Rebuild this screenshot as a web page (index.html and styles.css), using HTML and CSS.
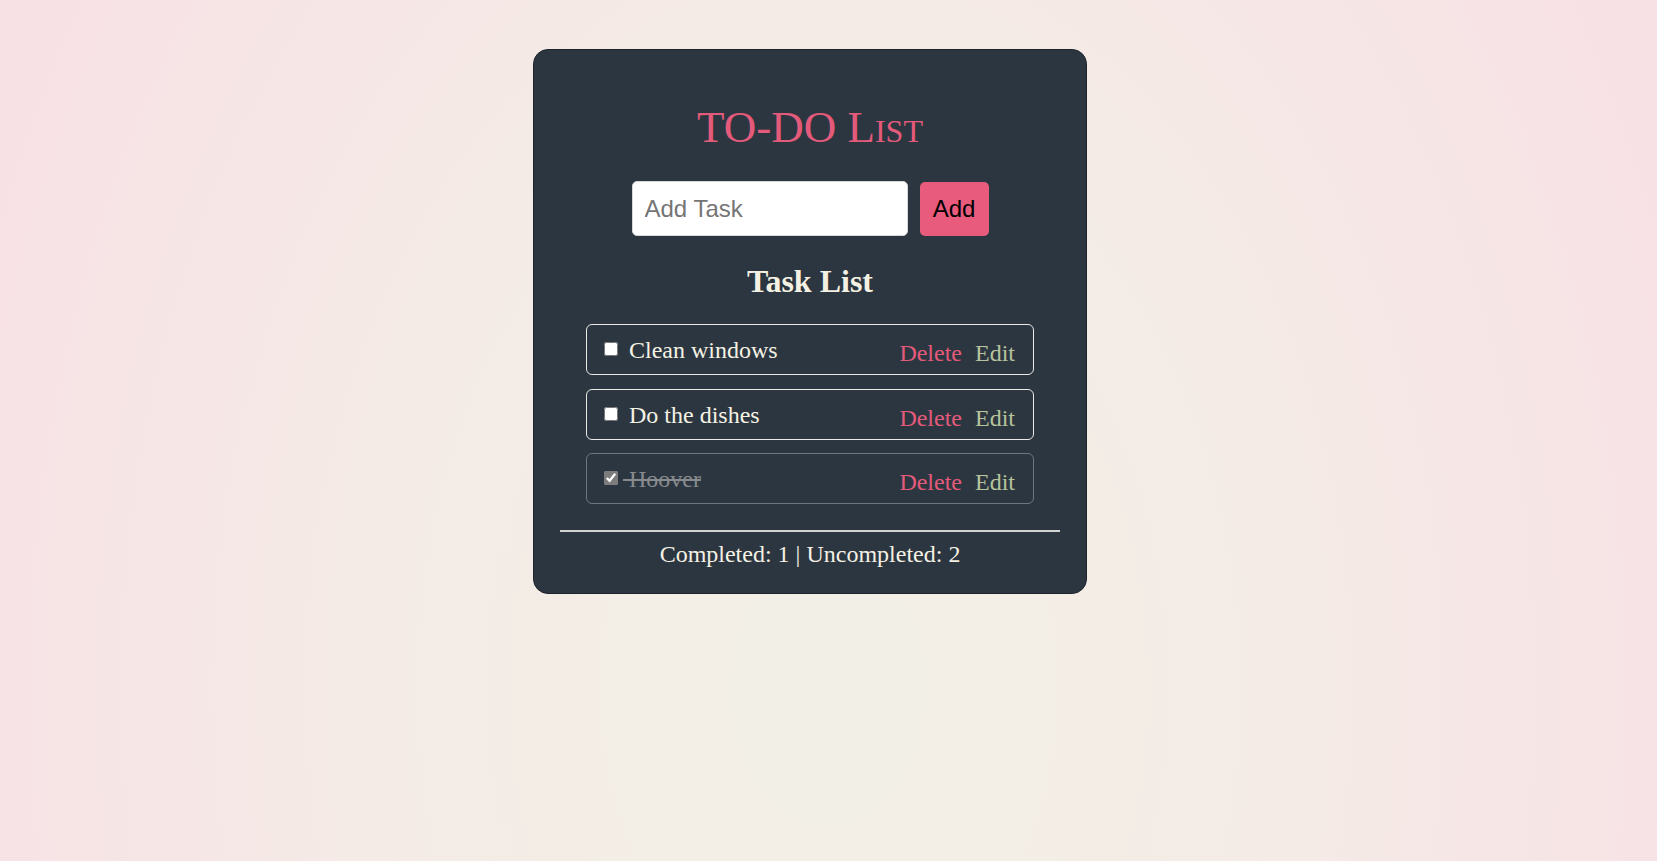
FILE: index.html
```html
<!DOCTYPE html>
<html lang="en">
<head>
<meta charset="utf-8">
<title>TO-DO List</title>
<link rel="stylesheet" href="styles.css">
</head>
<body>
<div class="page">
  <main class="card">
    <h1 class="title">TO-DO List</h1>
    <form class="add-row">
      <input class="add-input" type="text" placeholder="Add Task">
      <button class="add-btn" type="button">Add</button>
    </form>
    <h2 class="list-title">Task List</h2>
    <ul class="tasks">
      <li class="task">
        <label class="task-label"><input type="checkbox"><span class="task-text"> Clean windows</span></label>
        <div class="actions"><button class="del" type="button">Delete</button><button class="edit" type="button">Edit</button></div>
      </li>
      <li class="task">
        <label class="task-label"><input type="checkbox"><span class="task-text"> Do the dishes</span></label>
        <div class="actions"><button class="del" type="button">Delete</button><button class="edit" type="button">Edit</button></div>
      </li>
      <li class="task done">
        <label class="task-label"><input type="checkbox" checked><span class="task-text"> Hoover</span></label>
        <div class="actions"><button class="del" type="button">Delete</button><button class="edit" type="button">Edit</button></div>
      </li>
    </ul>
    <hr class="divider">
    <p class="stats">Completed: 1 | Uncompleted: 2</p>
  </main>
</div>
</body>
</html>
```
FILE: styles.css
```css
html, body {
  margin: 0;
  padding: 0;
}

body {
  min-height: 100vh;
  background: radial-gradient(ellipse 55% 150% at 50% 80%, #f2f0e6 0%, #f4ebe6 50%, #f8e1e5 100%);
  font-family: "Liberation Serif", "Times New Roman", serif;
}

.page {
  display: flex;
  justify-content: center;
  padding: 49px 37px 0 0;
}

.card {
  box-sizing: border-box;
  width: 554px;
  height: 545px;
  background: #2c3640;
  border: 1px solid #1d242b;
  border-radius: 15px;
  padding: 52px 26px 24px;
  display: flex;
  flex-direction: column;
  align-items: stretch;
}

.title {
  margin: 0;
  font-size: 45px;
  line-height: 50px;
  font-weight: 400;
  font-variant: small-caps;
  color: #e35a7b;
  text-align: center;
}

.add-row {
  margin: 29px 0 0;
  display: flex;
  justify-content: center;
  align-items: center;
  gap: 12px;
}

.add-input {
  box-sizing: border-box;
  width: 276px;
  height: 55px;
  border: 1px solid #d8d8d8;
  border-radius: 5px;
  padding: 0 12px;
  font-family: "Liberation Sans", Arial, sans-serif;
  font-size: 24px;
  color: #222;
  background: #fff;
  outline: none;
}

.add-input::placeholder {
  color: #757575;
}

.add-btn {
  box-sizing: border-box;
  height: 54px;
  width: 69px;
  padding: 0;
  border: none;
  border-radius: 5px;
  background: #e85b7c;
  color: #000;
  font-family: "Liberation Sans", Arial, sans-serif;
  font-size: 24px;
}

.list-title {
  margin: 25px 0 0;
  font-size: 32px;
  line-height: 40px;
  font-weight: 700;
  color: #f4f1e2;
  text-align: center;
}

.tasks {
  list-style: none;
  margin: 23px 26px 0;
  padding: 0;
  display: flex;
  flex-direction: column;
  gap: 13.5px;
}

.task {
  box-sizing: border-box;
  height: 51px;
  border: 1px solid #e9e9e6;
  border-radius: 6px;
  padding: 1px 18px 0 13px;
  display: flex;
  align-items: center;
  justify-content: space-between;
  font-size: 24px;
  line-height: 48px;
  color: #f5f2e4;
}

.task-label {
  display: block;
  white-space: pre;
}

.task-label input {
  width: 14px;
  height: 14px;
  margin: 3px 3px 3px 4px;
  vertical-align: middle;
  position: relative;
  top: -3px;
}

.task-text {
  margin-left: 2px;
}

.actions {
  display: flex;
  gap: 13px;
  padding-top: 6px;
}

.actions button {
  background: none;
  border: none;
  padding: 0;
  font-family: "Liberation Serif", "Times New Roman", serif;
  font-size: 24px;
  line-height: 30px;
}

.del {
  color: #e35a7b;
}

.edit {
  color: #b7c39c;
}

.task.done {
  border-color: #6f767c;
}

.task.done .task-text {
  color: #878b8e;
  text-decoration: line-through;
}

.task.done input {
  accent-color: #7c7c7c;
}

.divider {
  margin: 26px 0 0;
  border: none;
  border-top: 2px solid #d2d3d3;
  height: 0;
}

.stats {
  margin: 8px 0 0;
  font-size: 24px;
  line-height: 28px;
  color: #f4f1e4;
  text-align: center;
}
```
